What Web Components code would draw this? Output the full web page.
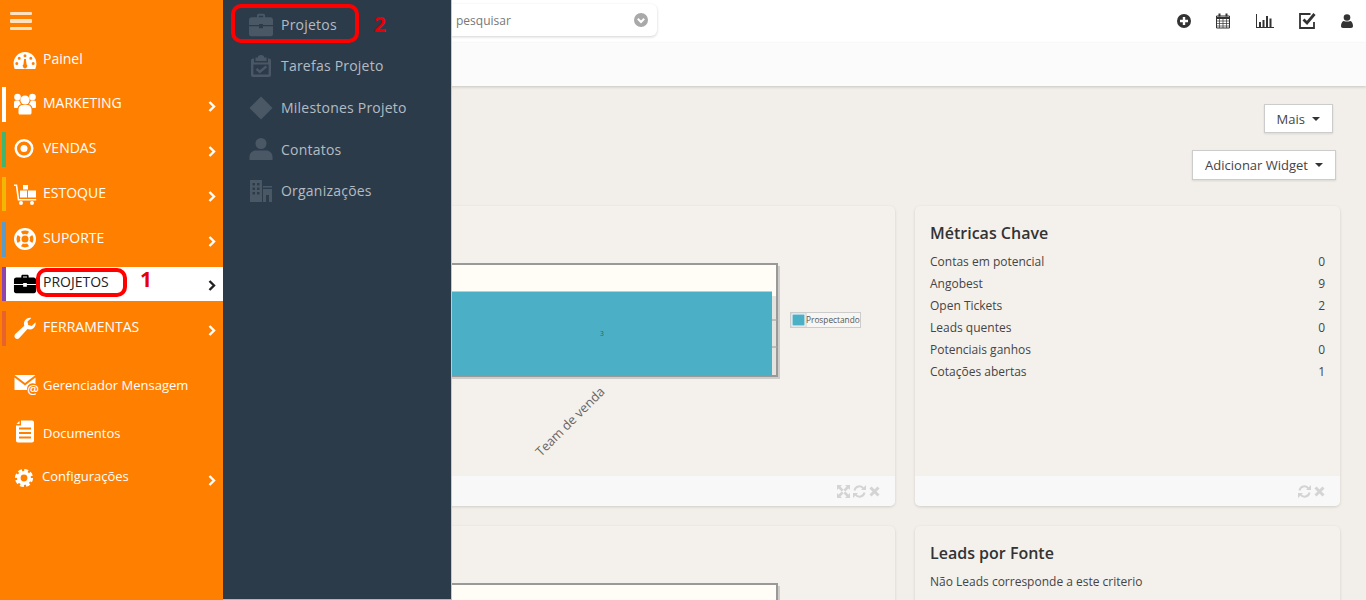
<!DOCTYPE html>
<html lang="pt">
<head>
<meta charset="utf-8">
<title>Painel</title>
<style>
    html, body { margin: 0; height: 600px; overflow: hidden; background: #f2efea; font-family: "Open Sans", sans-serif; }
    #app { display: flex; height: 600px; }
</style>
</head>
<body>
<div id="app">
    <crm-sidebar>
        <crm-nav-item label="Painel" icon="gauge" style="margin-top:0"></crm-nav-item>
        <crm-nav-item label="MARKETING" icon="group" accent="#ffffff" arrow style="margin-top:9.400px"></crm-nav-item>
        <crm-nav-item label="VENDAS" icon="target" accent="#3fb56f" arrow style="margin-top:10.300px"></crm-nav-item>
        <crm-nav-item label="ESTOQUE" icon="dolly" accent="#f2b705" arrow></crm-nav-item>
        <crm-nav-item label="SUPORTE" icon="ring" accent="#5b9bc8" arrow style="margin-top:10.400px"></crm-nav-item>
        <crm-nav-item label="PROJETOS" icon="case" accent="#8e44ad" arrow active></crm-nav-item>
        <crm-nav-item label="FERRAMENTAS" icon="wrench" accent="#e8622c" arrow style="margin-top:9.800px"></crm-nav-item>
        <crm-nav-item label="Gerenciador Mensagem" icon="mail" small style="margin-top:24px"></crm-nav-item>
        <crm-nav-item label="Documentos" icon="doc" small style="margin-top:13px"></crm-nav-item>
        <crm-nav-item label="Configurações" icon="gear" arrow small tight style="margin-top:9px"></crm-nav-item>
        <crm-callout number="1" style="left:36px;top:268px;width:91px;height:29px;--num-left:100px;--num-top:-5px"></crm-callout>
    </crm-sidebar>
    <crm-main>
        <crm-flyout slot="overlay">
            <crm-flyout-item label="Projetos" icon="case"></crm-flyout-item>
            <crm-flyout-item label="Tarefas Projeto" icon="task" style="margin-top:-.7px"></crm-flyout-item>
            <crm-flyout-item label="Milestones Projeto" icon="diamond" style="margin-top:.7px"></crm-flyout-item>
            <crm-flyout-item label="Contatos" icon="user"></crm-flyout-item>
            <crm-flyout-item label="Organizações" icon="org"></crm-flyout-item>
            <crm-callout number="2" style="left:8px;top:4px;width:128px;height:39px;--num-left:139px;--num-top:4px"></crm-callout>
        </crm-flyout>
        <crm-button slot="actions" label="Mais" style="margin-right:3px;height:29px"></crm-button>
        <crm-button slot="actions" label="Adicionar Widget" style="margin-top:17px;height:30px"></crm-button>
        <crm-card expand>
            <crm-chart></crm-chart>
        </crm-card>
        <crm-card heading="Métricas Chave">
            <crm-metric label="Contas em potencial" value="0"></crm-metric>
            <crm-metric label="Angobest" value="9"></crm-metric>
            <crm-metric label="Open Tickets" value="2"></crm-metric>
            <crm-metric label="Leads quentes" value="0"></crm-metric>
            <crm-metric label="Potenciais ganhos" value="0"></crm-metric>
            <crm-metric label="Cotações abertas" value="1"></crm-metric>
        </crm-card>
        <crm-card expand>
            <crm-chart plot-only></crm-chart>
        </crm-card>
        <crm-card heading="Leads por Fonte">
            <crm-metric label="Não Leads corresponde a este criterio"></crm-metric>
        </crm-card>
    </crm-main>
</div>

<script>
// All icons share a 24x24 box and paint with currentColor
const ICONS = {
    gauge: '<path transform="translate(0 1)" fill-rule="evenodd" d="M12 3C5.400 3 .6 8.300 .6 14.500c0 2 .4 3.600 1.100 5.500h20.600c.7-1.900 1.100-3.500 1.100-5.500C23.400 8.300 18.600 3 12 3zM12 5.200a1.500 1.500 0 1 1 0 3 1.500 1.500 0 0 1 0-3zM6.200 7.800a1.500 1.500 0 1 1 0 3 1.500 1.500 0 0 1 0-3zM17.800 7.800a1.500 1.500 0 1 1 0 3 1.500 1.500 0 0 1 0-3zM3.800 13a1.500 1.500 0 1 1 0 3 1.500 1.500 0 0 1 0-3zM20.200 13a1.500 1.500 0 1 1 0 3 1.500 1.500 0 0 1 0-3zM11.100 10h1.800l.6 5.200a2.300 2.300 0 1 1-3 0z"/>',
    group: '<circle cx="4.500" cy="5" r="3.300"/><circle cx="19.500" cy="5" r="3.300"/><circle cx="12" cy="8" r="4.600"/><path d="M1 10.500c0-1.300 .8-2 2-2h3.200c.3 1.500 1 2.800 2 3.600C6 13 4.800 14.500 4.600 16H2c-.6 0-1-.4-1-1zM23 10.500c0-1.300-.8-2-2-2h-3.200c-.3 1.500-1 2.800-2 3.600 2.200.9 3.400 2.400 3.600 3.900H22c.6 0 1-.4 1-1zM5.500 17.500c0-2.800 2-4.500 4-4.500h5c2 0 4 1.700 4 4.500v3.500c0 .8-.6 1.500-1.500 1.500H7c-.9 0-1.500-.7-1.500-1.500z"/>',
    target: '<path transform="translate(-1 -.5)" fill-rule="evenodd" d="M12 2.500a9.500 9.500 0 1 0 0 19 9.500 9.500 0 0 0 0-19zm0 2.500a7 7 0 1 1 0 14 7 7 0 0 1 0-14z"/><circle transform="translate(-1 -.5)" cx="12" cy="12" r="3.500"/>',
    dolly: '<path d="M1 2.500h3.200l2 14.500h17v1.600H4.800L2.800 4H1z"/><rect x="7" y="8.500" width="7" height="7"/><rect x="15" y="8.500" width="8" height="7"/><rect x="10" y="3" width="5" height="4.500"/><circle cx="8" cy="21" r="2"/><circle cx="19" cy="21" r="2"/>',
    ring: '<path fill-rule="evenodd" d="M12 1a11 11 0 1 0 0 22 11 11 0 0 0 0-22zm0 2.600c1.500 0 2.900.4 4.100 1.100l-2 2.700a5 5 0 0 0-4.200 0l-2-2.700A8.400 8.400 0 0 1 12 3.600zM4.700 7.900l2.700 2a5 5 0 0 0 0 4.200l-2.700 2a8.400 8.400 0 0 1 0-8.200zm14.600 0a8.400 8.400 0 0 1 0 8.200l-2.700-2a5 5 0 0 0 0-4.200zM12 8.500a3.500 3.500 0 1 1 0 7 3.500 3.500 0 0 1 0-7zm-2.100 8.100a5 5 0 0 0 4.200 0l2 2.700a8.400 8.400 0 0 1-8.200 0z"/>',
    case: '<path fill-rule="evenodd" d="M8 5V3.500C8 2.700 8.700 2 9.500 2h5c.8 0 1.500.7 1.500 1.500V5h5.500C22.900 5 24 6 24 7.500V12H14v-1h-4v1H0V7.500C0 6 1.100 5 2.500 5zM9.800 3.800V5h4.400V3.800zM0 13.200h10V15h4v-1.800h10V20c0 1.200-1 2-2.200 2H2.200C1 22 0 21.200 0 20z"/>',
    wrench: '<path d="M22.600 6.300c.3 2.500-.5 4.600-2.200 6-1.700 1.300-3.900 1.500-5.900.7L6.300 22c-1.100 1.100-2.800 1.200-3.900.2-1.200-1.100-1.300-3-.1-4.200l9-8.300c-.7-2-.4-4.200 1-5.800 1.500-1.700 3.700-2.400 6-2l-3.800 3.700.7 3.500 3.500.9z"/>',
    mail: '<path d="M1.500 0h21L12 8zM1.500 2.500V15h12.600c-.4-2.400.5-4.500 2.400-5.800 1.800-1.200 4-1.300 6-.3V2.500L12 10.500z"/><text x="14.300" y="18.800" font-size="13" font-family="Open Sans, sans-serif" font-weight="600">@</text>',
    doc: '<path transform="translate(0 -3.500)" fill-rule="evenodd" d="M8 1h11c1.200 0 2 .9 2 2v18c0 1.100-.8 2-2 2H5c-1.200 0-2-.9-2-2V6h5zM6.500 1.500V4.500H3.500zM6 8v2h12V8zm0 4.500v2h12v-2zM6 17v2h12v-2z"/>',
    gear: '<circle cx="12" cy="12" r="6.500" fill="none" stroke="currentColor" stroke-width="4.500"/><circle cx="12" cy="12" r="9" fill="none" stroke="currentColor" stroke-width="4.600" stroke-dasharray="4.500 2.568"/>',
    task: '<path fill-rule="evenodd" d="M9 3.500V2.800C9 1.800 10.300 1 12 1s3 .8 3 1.800v.7h2.500V7h-11V3.500zM4 4.500h1V8.500h14V4.500h1c1.100 0 2 .9 2 2V21c0 1.100-.9 2-2 2H4c-1.100 0-2-.9-2-2V6.500c0-1.100.9-2 2-2zM4.400 10.500V20.600h15.200V10.500zM16.500 11.500l1.700 1.700-7.500 6.300-4-3.700 1.700-1.800 2.300 2.200z"/>',
    diamond: '<path d="M12 .5 23.500 12 12 23.500.5 12z"/>',
    user: '<circle cx="12" cy="6.500" r="5.500"/><path d="M.5 23v-3c0-4 3-6.500 6.500-6.500h10c3.500 0 6.500 2.500 6.500 6.500v3z"/>',
    org: '<path fill-rule="evenodd" d="M1 1h12v22H1zM3.500 4v2.500h2.500V4zM8 4v2.500h2.500V4zM3.500 8.500V11h2.500V8.500zM8 8.500V11h2.500V8.500zM3.500 13v2.500h2.500V13zM8 13v2.500h2.500V13zM14 7h9v1.500h-9zM14 10h9v13h-3v-7h-3v7h-3z"/>'
};

const svgIcon = (name, size) => `<svg width="${size}" height="${size}" viewBox="0 0 24 24" fill="currentColor">${ICONS[name]}</svg>`;

class CrmSidebar extends HTMLElement {
    constructor() {
        super();
        this.attachShadow({ mode: "open" }).innerHTML = `
        <style>
            :host { display: block; position: relative; flex: none; width: 223px; height: 600px; background: #ff8000; z-index: 3; }
            #burger { display: flex; flex-direction: column; gap: 4px; width: 32px; height: 43px; padding: 12px 0 0 10px; box-sizing: border-box; }
            #burger i { display: block; height: 3.400px; background: #ffe0bf; border-radius: 1px; }
            ::slotted(crm-nav-item) { margin-top: 10px; }
        </style>
        <div id="burger"><i></i><i></i><i></i></div>
        <slot></slot>`;
    }
}

class CrmNavItem extends HTMLElement {
    constructor() {
        super();
        this.attachShadow({ mode: "open" });
    }

    connectedCallback() {
        const accent = this.getAttribute("accent") || "transparent";
        const arrow = this.hasAttribute("arrow")
            ? `<svg id="arrow" width="8" height="11" viewBox="0 0 8 11"><path d="M1.500 1 6 5.500 1.500 10" fill="none" stroke="currentColor" stroke-width="2.400"/></svg>`
            : "";
        this.shadowRoot.innerHTML = `
        <style>
            :host { display: block; height: 34.700px; color: #fff; font-size: 14px; }
            :host([small]) { font-size: 13px; }
            :host([active]) { color: #222; }
            #row { display: flex; align-items: center; height: 100%; margin-left: 2px; border-left: 4px solid ${accent}; }
            :host([active]) #row { background: #fff; }
            #icon { flex: none; width: 24px; height: 24px; margin-left: 7px; display: flex; }
            #icon svg { overflow: visible; }
            :host([active]) #icon { color: #000; }
            :host([icon="case"]) #icon svg { transform: scale(.92); }
            :host([icon="gear"]) #icon svg { transform: translateX(-1px) scale(.8); }
            #label { flex: 1; margin-left: 6px; position: relative; top: -2px; white-space: nowrap; }
            :host([tight]) #label { margin-left: 5px; }
            #arrow { flex: none; margin-right: 7px; position: relative; top: 2px; }
        </style>
        <div id="row">
            <span id="icon">${svgIcon(this.getAttribute("icon"), 24)}</span>
            <span id="label">${this.getAttribute("label")}</span>
            ${arrow}
        </div>`;
    }
}

class CrmFlyout extends HTMLElement {
    constructor() {
        super();
        this.attachShadow({ mode: "open" }).innerHTML = `
        <style>
            :host { display: block; position: absolute; left: 0; top: 0; width: 229px; height: 600px; box-sizing: border-box; background: #2c3b4a; border-right: 1px solid #c8c8c8; border-bottom: 1px solid #b5b5b5; padding-top: 4px; z-index: 5; }
        </style>
        <slot></slot>`;
    }
}

class CrmFlyoutItem extends HTMLElement {
    constructor() {
        super();
        this.attachShadow({ mode: "open" });
    }

    connectedCallback() {
        this.shadowRoot.innerHTML = `
        <style>
            :host { display: flex; align-items: center; height: 41.500px; font-size: 14px; font-weight: 500; letter-spacing: .22px; color: #b4bcc3; }
            #icon { flex: none; width: 24px; height: 24px; margin-left: 26px; color: #4a5866; display: flex; }
            :host([icon="case"]) #icon svg { transform: scaleY(1.12); }
            #label { margin-left: 8px; white-space: nowrap; }
        </style>
        <span id="icon">${svgIcon(this.getAttribute("icon"), 24)}</span>
        <span id="label">${this.getAttribute("label")}</span>`;
    }
}

// Red hand-drawn style annotation laid over the menus
class CrmCallout extends HTMLElement {
    constructor() {
        super();
        this.attachShadow({ mode: "open" });
    }

    connectedCallback() {
        this.shadowRoot.innerHTML = `
        <style>
            :host { display: block; position: absolute; box-sizing: border-box; border: 4px solid #f00; border-radius: 10px; pointer-events: none; }
            span { position: absolute; left: var(--num-left); top: var(--num-top); color: #e6000a; font: bold 21px "Open Sans", sans-serif; line-height: 24px; }
        </style>
        <span>${this.getAttribute("number")}</span>`;
    }
}

class CrmMain extends HTMLElement {
    constructor() {
        super();
        this.attachShadow({ mode: "open" }).innerHTML = `
        <style>
            :host { display: block; position: relative; flex: 1; min-width: 0; height: 600px; overflow: hidden; }
            #top { display: flex; align-items: center; height: 43px; background: #fff; box-sizing: border-box; }
            #search { display: flex; align-items: center; margin: -3px 0 0 228px; width: 206px; height: 32px; box-sizing: border-box; padding: 0 9px 0 5px; background: #fff; border-radius: 0 6px 6px 0; box-shadow: 0 1px 3px rgba(0,0,0,.18); font-size: 12px; color: #777; }
            #search span { flex: 1; }
            #search svg { color: #a9a9a9; }
            #tools { display: flex; align-items: center; margin: -2px 0 0 auto; color: #333; }
            #tools svg { display: block; }
            #sub { height: 43px; background: #fbfbfb; box-shadow: 0 1px 3px rgba(0,0,0,.18); position: relative; }
            #actions { display: flex; flex-direction: column; align-items: flex-end; padding: 18px 30px 0 0; }
            #grid { display: grid; grid-template-columns: 1fr 425px; gap: 20px; padding: 26px 26px 0 15px; }
        </style>
        <slot name="overlay"></slot>
        <div id="top">
            <div id="search">
                <span>pesquisar</span>
                <svg width="14" height="14" viewBox="0 0 14 14"><circle cx="7" cy="7" r="7" fill="currentColor"/><path d="M3.800 5.800 7 9l3.200-3.200" fill="none" stroke="#fff" stroke-width="2"/></svg>
            </div>
            <div id="tools">
                <svg style="margin-right:24px" width="14" height="14" viewBox="0 0 14 14"><circle cx="7" cy="7" r="7" fill="currentColor"/><path d="M7 3v8M3 7h8" stroke="#fff" stroke-width="2.400"/></svg>
                <svg style="margin-right:25px" width="16" height="16" viewBox="0 0 16 16"><path fill="none" stroke="currentColor" d="M1.500 3h13v12h-13z"/><path stroke="currentColor" stroke-width="2" d="M4.500 0.500v3M11.500 0.500v3M1 5h14"/><path stroke="currentColor" stroke-width=".7" d="M1.500 8h13M1.500 10.500h13M1.500 13h13M4.500 5v10M8 5v10M11.500 5v10"/></svg>
                <svg style="margin-right:25px" width="18" height="14" viewBox="0 0 18 14"><path fill="currentColor" d="M0 0h1v13h17v1H0zM3 8h2v5H3zM6.500 6h2v7h-2zM10 2h2v11h-2zM13.500 4.500h2V13h-2z"/></svg>
                <svg style="margin-right:25px" width="17" height="17" viewBox="0 0 17 17"><path fill="none" stroke="currentColor" stroke-width="1.800" d="M11.500 2H1v14h14v-6"/><path fill="none" stroke="currentColor" stroke-width="2.800" d="m4.500 7.500 3.500 3.500 7.500-9"/></svg>
                <svg style="margin-right:13px" width="12" height="14" viewBox="0 0 12 14"><circle cx="6" cy="3.500" r="3.300" fill="currentColor"/><path fill="currentColor" d="M0 12c0-3 1.500-5 3-5 1 .8 5 .8 6 0 1.500 0 3 2 3 5 0 1.200-.7 2-2 2H2c-1.300 0-2-.8-2-2z"/></svg>
            </div>
        </div>
        <div id="sub"></div>
        <div id="actions"><slot name="actions"></slot></div>
        <div id="grid"><slot></slot></div>`;
    }
}

class CrmButton extends HTMLElement {
    constructor() {
        super();
        this.attachShadow({ mode: "open" });
    }

    connectedCallback() {
        this.shadowRoot.innerHTML = `
        <style>
            :host { display: flex; align-items: center; box-sizing: border-box; padding: 0 12px; background: #fff; border: 1px solid #ccc; box-shadow: 0 1px 2px rgba(0,0,0,.1); font-size: 13px; color: #444; }
            i { display: block; margin-left: 7px; border: 4px solid transparent; border-top-color: #333; border-bottom: 0; }
        </style>
        <span>${this.getAttribute("label")}</span><i></i>`;
    }
}

class CrmCard extends HTMLElement {
    constructor() {
        super();
        this.attachShadow({ mode: "open" });
    }

    connectedCallback() {
        const heading = this.getAttribute("heading");
        const expand = this.hasAttribute("expand")
            ? `<svg width="13" height="13" viewBox="0 0 13 13"><path fill="currentColor" d="M0 0h5L3.500 1.500 6.500 4.800 4.800 6.500 1.500 3.500 0 5zM13 0v5l-1.500-1.500-3.300 3-1.700-1.700 3-3.300L8 0zM0 13V8l1.500 1.500 3.300-3 1.700 1.700-3 3.300L5 13zM13 13H8l1.500-1.500-3-3.300 1.700-1.700 3.300 3L13 8z"/></svg>`
            : "";
        this.shadowRoot.innerHTML = `
        <style>
            :host { display: block; height: 300px; border-radius: 5px; background: #f4f1ed; box-shadow: 0 1px 3px rgba(0,0,0,.14); overflow: hidden; }
            #wrap { display: flex; flex-direction: column; height: 100%; }
            #body { flex: 1; min-height: 0; ${heading ? "padding: 15px 15px 0;" : ""} }
            h3 { margin: 0 0 6px; font-size: 16px; font-weight: 600; line-height: 24px; color: #333; }
            #foot { display: flex; align-items: center; justify-content: flex-end; gap: 3px; flex: none; height: 30px; padding-right: 15px; background: #f8f8f8; color: #d4d4d4; }
        </style>
        <div id="wrap">
            <div id="body">${heading ? `<h3>${heading}</h3>` : ""}<slot></slot></div>
            <div id="foot">
                ${expand}
                <svg width="13" height="13" viewBox="0 0 13 13"><path fill="none" stroke="currentColor" stroke-width="2" d="M1.500 5.500A5 5 0 0 1 10.500 3.500M11.500 7.500A5 5 0 0 1 2.500 9.500"/><path fill="currentColor" d="M13 0v5H8zM0 13V8h5z"/></svg>
                <svg width="11" height="11" viewBox="0 0 11 11"><path stroke="currentColor" stroke-width="3" d="m1.500 1.500 8 8M9.500 1.500l-8 8"/></svg>
            </div>
        </div>`;
    }
}

class CrmMetric extends HTMLElement {
    constructor() {
        super();
        this.attachShadow({ mode: "open" });
    }

    connectedCallback() {
        const value = this.getAttribute("value");
        this.shadowRoot.innerHTML = `
        <style>
            :host { display: flex; justify-content: space-between; height: 22px; line-height: 22px; font-size: 12px; color: #444; }
        </style>
        <span>${this.getAttribute("label")}</span>${value ? `<span>${value}</span>` : ""}`;
    }
}

// Bar chart, coordinates are relative to the top left of the card
class CrmChart extends HTMLElement {
    constructor() {
        super();
        this.attachShadow({ mode: "open" });
    }

    connectedCallback() {
        // The lower chart only shows its top edge above the fold, so no labels there
        const labels = this.hasAttribute("plot-only") ? "" : `
            <text x="364" y="130" font-size="7" fill="#555" text-anchor="middle">3</text>
            <text transform="translate(303 251) rotate(-45)" font-size="12.800" fill="#666">Team de venda</text>
            <rect x="552.500" y="106.500" width="70" height="15" fill="#f8f6f2" stroke="#ccc"/>
            <rect x="553" y="107" width="15" height="14" fill="#fff" stroke="#ccc"/>
            <rect x="554.500" y="108.500" width="12" height="11" fill="#4bb0c6"/>
            <text x="568" y="117" font-size="8.300" fill="#555">Prospectando</text>`;
        const bar = this.hasAttribute("plot-only") ? "" : `
            <path d="M534 114h5M534 141h5" stroke="#aaa"/>
            <rect x="534" y="90" width="4" height="79" fill="#000" opacity=".1"/>
            <rect x="10" y="85.500" width="524" height="84.500" fill="#4bb0c6"/>`;
        this.shadowRoot.innerHTML = `
        <style>
            :host { display: block; height: 270px; }
            svg { display: block; }
            text { font-family: "Open Sans", sans-serif; }
        </style>
        <svg width="657" height="270" viewBox="0 0 657 270">
            <rect x="12" y="60" width="530" height="113" fill="#000" opacity=".15"/>
            <rect x="10" y="58" width="529" height="112" fill="#fffdf6" stroke="#999" stroke-width="2"/>
            ${bar}
            ${labels}
        </svg>`;
    }
}

customElements.define("crm-sidebar", CrmSidebar);
customElements.define("crm-nav-item", CrmNavItem);
customElements.define("crm-flyout", CrmFlyout);
customElements.define("crm-flyout-item", CrmFlyoutItem);
customElements.define("crm-callout", CrmCallout);
customElements.define("crm-main", CrmMain);
customElements.define("crm-button", CrmButton);
customElements.define("crm-card", CrmCard);
customElements.define("crm-metric", CrmMetric);
customElements.define("crm-chart", CrmChart);
</script>
</body>
</html>
